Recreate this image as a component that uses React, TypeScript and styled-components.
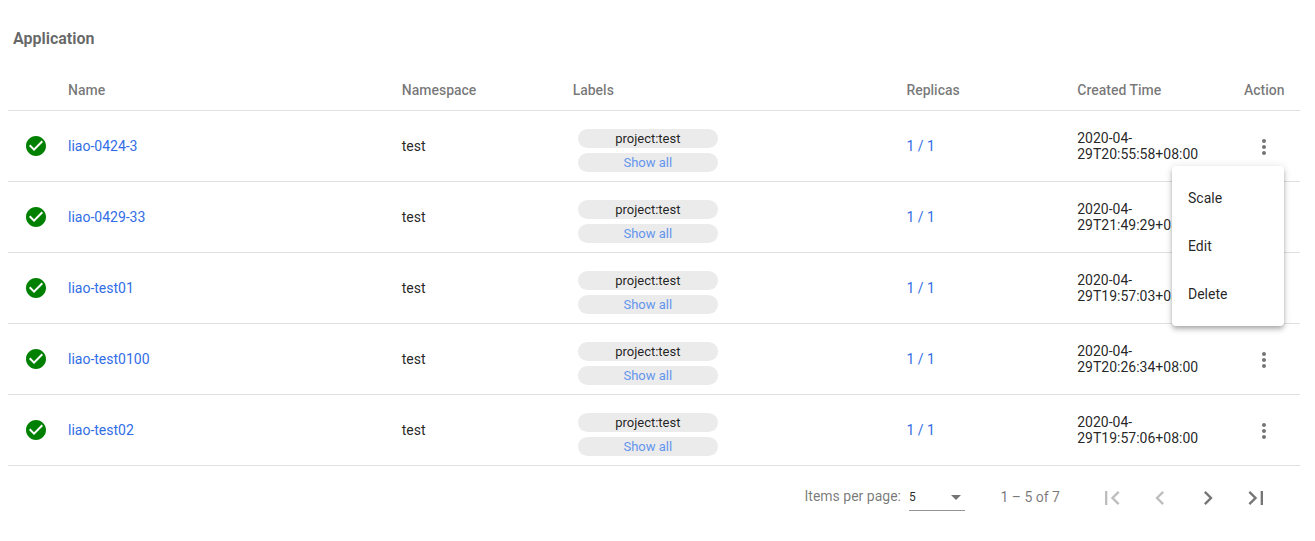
import React from 'react';
import styled, { createGlobalStyle } from 'styled-components';

const GlobalStyle = createGlobalStyle`
  *, *::before, *::after { box-sizing: border-box; }
  body {
    margin: 0;
    background: #fff;
    color: rgba(0, 0, 0, 0.87);
    font: 400 14px/16px Roboto, "Liberation Sans", sans-serif;
  }
`;

const Page = styled.main`
  width: 1315px;
  height: 541px;
  padding: 8px 15px 0 8px;
  overflow: hidden;
`;

const Title = styled.h1`
  margin: 0;
  height: 62px;
  padding: 0 5px;
  font-size: 16px;
  font-weight: 700;
  line-height: 62px;
  color: rgba(0, 0, 0, 0.6);
`;

const Row = styled.div<{ $header?: boolean }>`
  display: grid;
  grid-template-columns: 60px 333.76px 170.88px 333.76px 170.88px 166.72px 1fr;
  align-items: center;
  height: ${({ $header }) => ($header ? 41 : 71)}px;
  border-bottom: 1px solid rgba(0, 0, 0, 0.12);
  ${({ $header }) => $header && 'color: rgba(0, 0, 0, 0.54); font-weight: 500;'}
`;

const StatusCell = styled.div`
  padding-left: 16px;
  height: 24px;
`;

const Link = styled.a`
  color: #326de6;
  text-decoration: none;
  cursor: pointer;
`;

const Labels = styled.div`
  display: flex;
  flex-direction: column;
  gap: 5px;
  padding: 8px 0 0 5.2px;
`;

const Pill = styled.span<{ $action?: boolean }>`
  width: 140px;
  height: 19px;
  border-radius: 10px;
  background: #ebebeb;
  font-size: 13px;
  line-height: 19px;
  text-align: center;
  ${({ $action }) => $action && 'color: #6495ed; cursor: pointer;'}
`;

const Time = styled.div`
  width: 124px;
`;

const ActionCell = styled.div`
  position: relative;
  padding-left: 8px;
  height: 24px;
  margin-top: 2px;
`;

const IconButton = styled.button<{ $size: number }>`
  display: flex;
  align-items: center;
  justify-content: center;
  width: ${({ $size }) => $size}px;
  height: ${({ $size }) => $size}px;
  padding: 0;
  border: 0;
  background: none;
  color: rgba(0, 0, 0, 0.54);
  &:disabled { color: rgba(0, 0, 0, 0.26); }
`;

const Menu = styled.div`
  position: absolute;
  z-index: 2;
  top: 31px;
  right: 16px;
  width: 112px;
  padding: 8px 0;
  border-radius: 4px;
  background: #fff;
  box-shadow: 0 2px 4px -1px rgba(0, 0, 0, 0.2), 0 4px 5px 0 rgba(0, 0, 0, 0.14),
    0 1px 10px 0 rgba(0, 0, 0, 0.12);
`;

const MenuItem = styled.div`
  padding: 0 16px;
  line-height: 48px;
`;

const Paginator = styled.footer`
  display: flex;
  align-items: center;
  justify-content: flex-end;
  height: 64px;
  padding-right: 24px;
  color: rgba(0, 0, 0, 0.54);
`;

const PageSizeLabel = styled.span`
  margin-bottom: 4px;
`;

const Range = styled.span`
  margin-bottom: 2px;
`;

const Select = styled.div`
  display: flex;
  align-items: center;
  justify-content: space-between;
  width: 56px;
  height: 28px;
  margin: 0 35.5px 2px 8px;
  padding-right: 4px;
  border-bottom: 1px solid rgba(0, 0, 0, 0.42);
  font-size: 12px;
  color: rgba(0, 0, 0, 0.87);
`;

const Arrow = styled.span`
  margin-top: 1px;
  border: 5px solid transparent;
  border-top-color: rgba(0, 0, 0, 0.54);
  border-bottom: 0;
`;

const PageButtons = styled.div`
  display: flex;
  gap: 8px;
  margin: 0 0 0 32px;
`;

const PAGE_ICONS = [
  { name: 'First page', d: 'M18.41 16.59L13.82 12l4.59-4.59L17 6l-6 6 6 6zM6 6h2v12H6z', disabled: true },
  { name: 'Previous page', d: 'M15.41 7.41L14 6l-6 6 6 6 1.41-1.41L10.83 12z', disabled: true },
  { name: 'Next page', d: 'M10 6L8.59 7.41 13.17 12l-4.58 4.59L10 18l6-6z', disabled: false },
  { name: 'Last page', d: 'M5.59 7.41L10.18 12l-4.59 4.59L7 18l6-6-6-6zM16 6h2v12h-2z', disabled: false },
];

const APPLICATIONS = [
  { name: 'liao-0424-3', time: '29T20:55:58+08:00' },
  { name: 'liao-0429-33', time: '29T21:49:29+08:00' },
  { name: 'liao-test01', time: '29T19:57:03+08:00' },
  { name: 'liao-test0100', time: '29T20:26:34+08:00' },
  { name: 'liao-test02', time: '29T19:57:06+08:00' },
];

const Icon = ({ d, size = 24, color = 'currentColor' }: { d: string; size?: number; color?: string }) => (
  <svg width={size} height={size} viewBox="0 0 24 24" fill={color}>
    <path d={d} />
  </svg>
);

export default function App() {
  return (
    <>
      <GlobalStyle />
      <Page>
        <Title>Application</Title>
        <Row $header>
          <span />
          <span>Name</span>
          <span>Namespace</span>
          <span>Labels</span>
          <span>Replicas</span>
          <span>Created Time</span>
          <span>Action</span>
        </Row>
        {APPLICATIONS.map((app, index) => (
          <Row key={app.name}>
            <StatusCell>
              <Icon
                color="#008000"
                d="M12 2C6.48 2 2 6.48 2 12s4.48 10 10 10 10-4.48 10-10S17.52 2 12 2zm-2 15l-5-5 1.41-1.41L10 14.17l7.59-7.59L19 8l-9 9z"
              />
            </StatusCell>
            <Link>{app.name}</Link>
            <span>test</span>
            <Labels>
              <Pill>project:test</Pill>
              <Pill $action>Show all</Pill>
            </Labels>
            <Link>1 / 1</Link>
            <Time>
              2020-04-
              <br />
              {app.time}
            </Time>
            <ActionCell>
              <IconButton $size={24} aria-label="Actions">
                <Icon d="M12 8c1.1 0 2-.9 2-2s-.9-2-2-2-2 .9-2 2 .9 2 2 2zm0 2c-1.1 0-2 .9-2 2s.9 2 2 2 2-.9 2-2-.9-2-2-2zm0 6c-1.1 0-2 .9-2 2s.9 2 2 2 2-.9 2-2-.9-2-2-2z" />
              </IconButton>
              {index === 0 && (
                <Menu>
                  <MenuItem>Scale</MenuItem>
                  <MenuItem>Edit</MenuItem>
                  <MenuItem>Delete</MenuItem>
                </Menu>
              )}
            </ActionCell>
          </Row>
        ))}
        <Paginator>
          <PageSizeLabel>Items per page:</PageSizeLabel>
          <Select>
            <span>5</span>
            <Arrow />
          </Select>
          <Range>1 – 5 of 7</Range>
          <PageButtons>
            {PAGE_ICONS.map((icon) => (
              <IconButton key={icon.name} $size={40} disabled={icon.disabled} aria-label={icon.name}>
                <Icon d={icon.d} size={28} />
              </IconButton>
            ))}
          </PageButtons>
        </Paginator>
      </Page>
    </>
  );
}
